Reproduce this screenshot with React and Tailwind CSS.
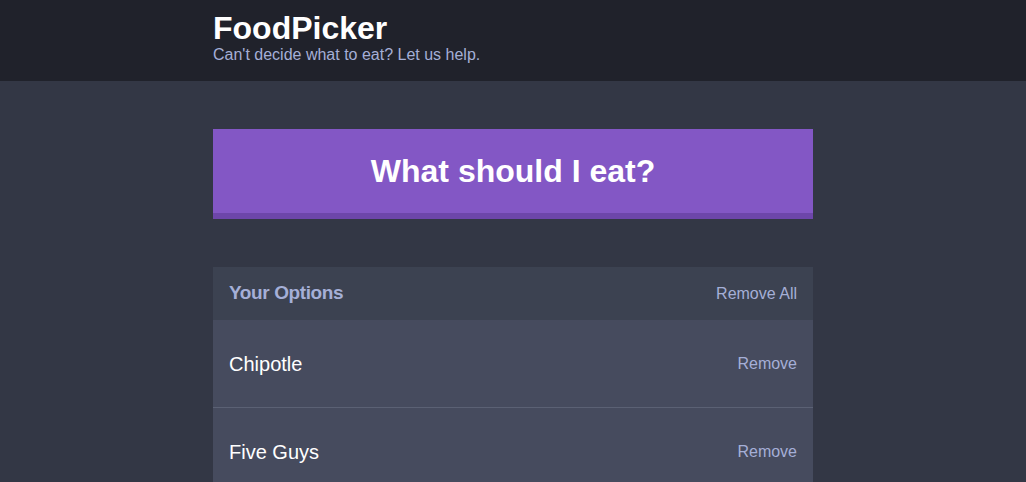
export default function App() {
  const font = { fontFamily: '"Liberation Sans", Arial, Helvetica, sans-serif' };
  const options = ["Chipotle", "Five Guys"];
  return (
    <div className="min-h-[482px] bg-[#333745] text-white" style={font}>
      <header className="bg-[#20222b] pt-[12px] pb-[16px]">
        <div className="mx-auto w-[600px]">
          <h1 className="text-[32px] font-bold leading-[32px] text-white">FoodPicker</h1>
          <h2 className="mt-[1px] text-[16px] leading-[20px] text-[#a5afd7]">Can't decide what to eat? Let us help.</h2>
        </div>
      </header>
      <div className="mx-auto w-[600px] pt-[48px]">
        <button className="block w-full bg-[#8357c5] border-b-[6px] border-[#6d46aa] pt-[24px] pb-[23px] text-[32px] font-bold leading-[37px] text-white">
          What should I eat?
        </button>
        <div className="mt-[48px] bg-[#464b5e]">
          <div className="flex h-[53px] items-center justify-between bg-[#3c4251] px-[16px]">
            <h3 className="text-[19px] font-bold tracking-[-0.4px] text-[#a5afd7]">Your Options</h3>
            <button className="text-[16px] text-[#a5afd7]">Remove All</button>
          </div>
          {options.map((o) => (
            <div key={o} className="flex h-[88px] items-center justify-between border-b border-[#5b6174] px-[16px]">
              <p className="text-[20px] text-white">{o}</p>
              <button className="text-[16px] text-[#a5afd7]">Remove</button>
            </div>
          ))}
        </div>
      </div>
    </div>
  );
}
